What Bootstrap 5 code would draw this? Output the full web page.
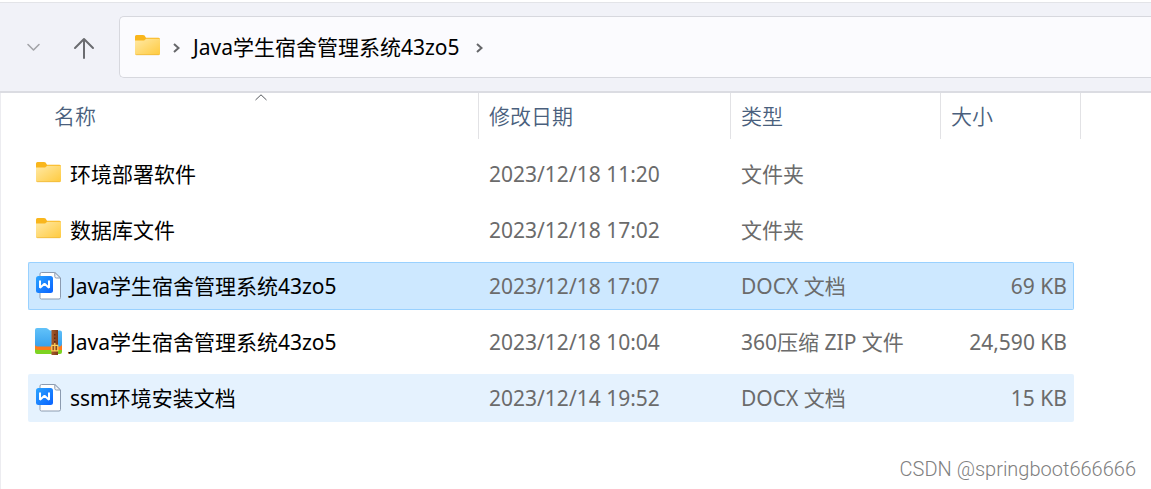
<!DOCTYPE html>
<html lang="zh-CN">
<head>
<meta charset="utf-8">
<meta name="viewport" content="width=device-width, initial-scale=1">
<title>Java学生宿舍管理系统43zo5</title>
<link href="https://cdn.jsdelivr.net/npm/bootstrap@5.3.0/dist/css/bootstrap.min.css" rel="stylesheet">
<style>
body { font-family: "Noto Sans", "Noto Sans CJK SC", sans-serif; font-size: 21px; line-height: 32px; color: #000; background: #fff; }
.toolbar { border-top: 1px solid #e3e4e8; border-bottom: 2px solid #dbdce2; background: #f1f2f8; padding: 13px 0 13px 24px; }
.tool-btn { border: 0; background: none; padding: 0; line-height: 0; }
.address { height: 62px; border: 1px solid #d7d8de; border-right: 0; border-radius: 5px 0 0 5px; background: #fbfbfe; padding-left: 13px; margin-left: 23px; }
.address a { color: #000; margin: 0 12px; }
.page { min-height: 100vh; padding-top: 2px; }
.files { border-left: 1px solid #ececf0; }
.file-area { padding: 0 70px 0 27px; }
.file-table { width: 100%; margin-top: -8px; table-layout: fixed; border-collapse: separate; border-spacing: 0 8px; }
.col-date { width: 252px; }
.col-kind { width: 210px; }
.col-size { width: 133px; }
.col-gap { width: 7px; }
.file-table th { height: 49px; padding: 0; vertical-align: top; }
.head-btn { display: block; width: 100%; height: 46px; border: 0; border-right: 1px solid #e2e2e5; background: none; padding: 0 10px; text-align: left; color: #4a5f7d; font-weight: 350; }
.head-name { padding-left: 26px; }
.sort-mark { position: absolute; top: 1px; left: 50%; margin-left: 2px; }
.file-table td { height: 48px; padding: 0 10px; color: #6b6b6b; white-space: nowrap; }
.file-table td:first-child { padding-left: 6px; border-radius: 2px 0 0 2px; }
.file-table td:last-child { padding-right: 7px; border-radius: 0 2px 2px 0; }
.file-table td a { color: #000; }
.is-hover td { background: #e5f2fe; }
.is-selected td { background: #cde8ff; border: 1px solid #99d1ff; border-width: 1px 0; }
.is-selected td:first-child { border-left-width: 1px; padding-left: 5px; }
.is-selected td:last-child { border-right-width: 1px; padding-right: 6px; }
.watermark { padding: 23px 15px 0 0; font-family: Roboto, "Liberation Sans", sans-serif; font-size: 20px; font-weight: 300; line-height: 32px; color: #808080; }
</style>
</head>
<body>
<svg class="position-absolute" width="0" height="0" aria-hidden="true">
  <defs>
    <linearGradient id="gFolder" x1="0" y1="0" x2="1" y2="1"><stop offset="0" stop-color="#ffe9a6"/><stop offset="1" stop-color="#ffca3e"/></linearGradient>
    <linearGradient id="gDoc" x1="0" y1="0" x2="1" y2="1"><stop offset="0" stop-color="#2ba4ff"/><stop offset="1" stop-color="#0a62ff"/></linearGradient>
    <linearGradient id="gZip" x1="0" y1="0" x2="0" y2="1"><stop offset="0" stop-color="#62c2f9"/><stop offset="1" stop-color="#38a2ee"/></linearGradient>
    <linearGradient id="gBelt" x1="0" y1="0" x2="1" y2="0"><stop offset="0" stop-color="#a75a2c"/><stop offset="1" stop-color="#7c3c1b"/></linearGradient>
  </defs>
  <symbol id="folder" viewBox="0 2 28 28">
    <path d="M2 5.500Q2 4 3.500 4H10q1 0 1.600.6L13 6.700h12.500q1.500 0 1.500 1.500V12H2z" fill="#f9b61c"/>
    <path d="M2 9.500h8.500q.7 0 1.200-.5l1.500-1.300H26q1 0 1 1V22.500q0 1.500-1.500 1.500h-22Q2 24 2 22.500z" fill="url(#gFolder)"/>
    <path d="M2.500 23.300q.4.400 1 .4h22q.6 0 1-.4" fill="none" stroke="#eeb436" stroke-width=".7"/>
  </symbol>
  <symbol id="docx" viewBox="0 2 28 28">
    <path d="M7.500 1.500h13.800L26.500 7v19.500q0 2-2 2h-15q-2 0-2-2v-25z" fill="none"/>
    <path d="M7.500 2.500h13.300L26.500 8v19.500q0 1.500-1.500 1.500H7.500Q6 29 6 27.500V4q0-1.500 1.500-1.500z" fill="#fff" stroke="#8c9bb0"/>
    <path d="M20.800 2.500V6.500q0 1.500 1.500 1.500h4.200z" fill="#eef1f5" stroke="#8c9bb0"/>
    <rect x="2" y="6" width="17" height="17" rx="2.500" fill="url(#gDoc)"/>
    <path d="M6 10.500V17.800l4.500-4 4.500 4V10.500" fill="none" stroke="#fff" stroke-width="2" stroke-linejoin="bevel"/>
  </symbol>
  <symbol id="zip" viewBox="-1 1 28 28">
    <path d="M0 18h27v7q0 2-2 2H2q-2 0-2-2z" fill="#7ed321"/>
    <path d="M0 17h27v6H2.500Q0 23 0 20.500z" fill="#ff7a1c"/>
    <path d="M0 3q0-2 2-2h9q1 0 1.700.7L15 3.500h10q2 0 2 2v11q0 3-3 3H2.500Q0 19.500 0 17.500z" fill="url(#gZip)"/>
    <rect x="16.500" y="3" width="6.500" height="25" fill="url(#gBelt)"/>
    <path d="M19 7h1.500v1.500H19zM19 10.500h1.500V12H19zM19 14h1.500v1.500H19z" fill="#5f2b12"/>
    <path d="M16.800 18.300h6v5.500h-6zM19.800 16v7.500" fill="none" stroke="#ffd45b" stroke-width="1.200"/>
  </symbol>
</svg>

<div class="page d-flex flex-column">
<header class="toolbar d-flex align-items-center">
  <button class="tool-btn" type="button" aria-label="最近浏览的位置">
    <svg width="20" height="20" viewBox="0 0 20 20" fill="none" stroke="#a3a4a8" stroke-width="1.600" stroke-linecap="round" stroke-linejoin="round"><path d="M4 7.500l5.500 5.500L15 7.500"/></svg>
  </button>
  <button class="tool-btn ms-4 ps-1" type="button" aria-label="上一级">
    <svg width="24" height="24" viewBox="0 0 24 24" fill="none" stroke="#6b6c70" stroke-width="2" stroke-linecap="round" stroke-linejoin="round"><path d="M12 23V4M3 13l9-9 9 9"/></svg>
  </button>
  <nav class="address d-flex align-items-center flex-grow-1" aria-label="路径">
    <svg width="28" height="28"><use href="#folder"/></svg>
    <svg class="ms-2" width="12" height="20" viewBox="0 0 12 20" fill="none" stroke="#66676a" stroke-width="2"><path d="M5 7l4.500 4L5 15"/></svg>
    <a class="text-decoration-none" href="#">Java学生宿舍管理系统43zo5</a>
    <svg width="12" height="20" viewBox="0 0 12 20" fill="none" stroke="#66676a" stroke-width="2"><path d="M5 7l4.500 4L5 15"/></svg>
  </nav>
</header>

<div class="files flex-grow-1">
<main class="file-area">
  <table class="file-table">
    <colgroup><col><col class="col-date"><col class="col-kind"><col class="col-size"><col class="col-gap"></colgroup>
    <thead>
      <tr>
        <th scope="col"><button class="head-btn head-name position-relative" type="button">名称
          <svg class="sort-mark" width="12" height="7" viewBox="0 0 12 7" fill="none" stroke="#55585e"><path d="M.500 6L6 .800 11.500 6"/></svg></button></th>
        <th scope="col"><button class="head-btn" type="button">修改日期</button></th>
        <th scope="col"><button class="head-btn" type="button">类型</button></th>
        <th scope="col" colspan="2"><button class="head-btn" type="button">大小</button></th>
      </tr>
    </thead>
    <tbody>
      <tr>
        <td><div class="d-flex align-items-center"><svg class="me-2" width="28" height="28"><use href="#folder"/></svg><a class="text-decoration-none" href="#">环境部署软件</a></div></td>
        <td>2023/12/18 11:20</td><td>文件夹</td><td></td>
      </tr>
      <tr>
        <td><div class="d-flex align-items-center"><svg class="me-2" width="28" height="28"><use href="#folder"/></svg><a class="text-decoration-none" href="#">数据库文件</a></div></td>
        <td>2023/12/18 17:02</td><td>文件夹</td><td></td>
      </tr>
      <tr class="is-selected">
        <td><div class="d-flex align-items-center"><svg class="me-2" width="28" height="28"><use href="#docx"/></svg><a class="text-decoration-none" href="#">Java学生宿舍管理系统43zo5</a></div></td>
        <td>2023/12/18 17:07</td><td>DOCX 文档</td><td class="text-end">69 KB</td>
      </tr>
      <tr>
        <td><div class="d-flex align-items-center"><svg class="me-2" width="28" height="28"><use href="#zip"/></svg><a class="text-decoration-none" href="#">Java学生宿舍管理系统43zo5</a></div></td>
        <td>2023/12/18 10:04</td><td>360压缩 ZIP 文件</td><td class="text-end">24,590 KB</td>
      </tr>
      <tr class="is-hover">
        <td><div class="d-flex align-items-center"><svg class="me-2" width="28" height="28"><use href="#docx"/></svg><a class="text-decoration-none" href="#">ssm环境安装文档</a></div></td>
        <td>2023/12/14 19:52</td><td>DOCX 文档</td><td class="text-end">15 KB</td>
      </tr>
    </tbody>
  </table>
</main>
<footer class="watermark text-end">CSDN @springboot666666</footer>
</div>
</div>
<script src="https://cdn.jsdelivr.net/npm/bootstrap@5.3.0/dist/js/bootstrap.bundle.min.js"></script>
</body>
</html>
